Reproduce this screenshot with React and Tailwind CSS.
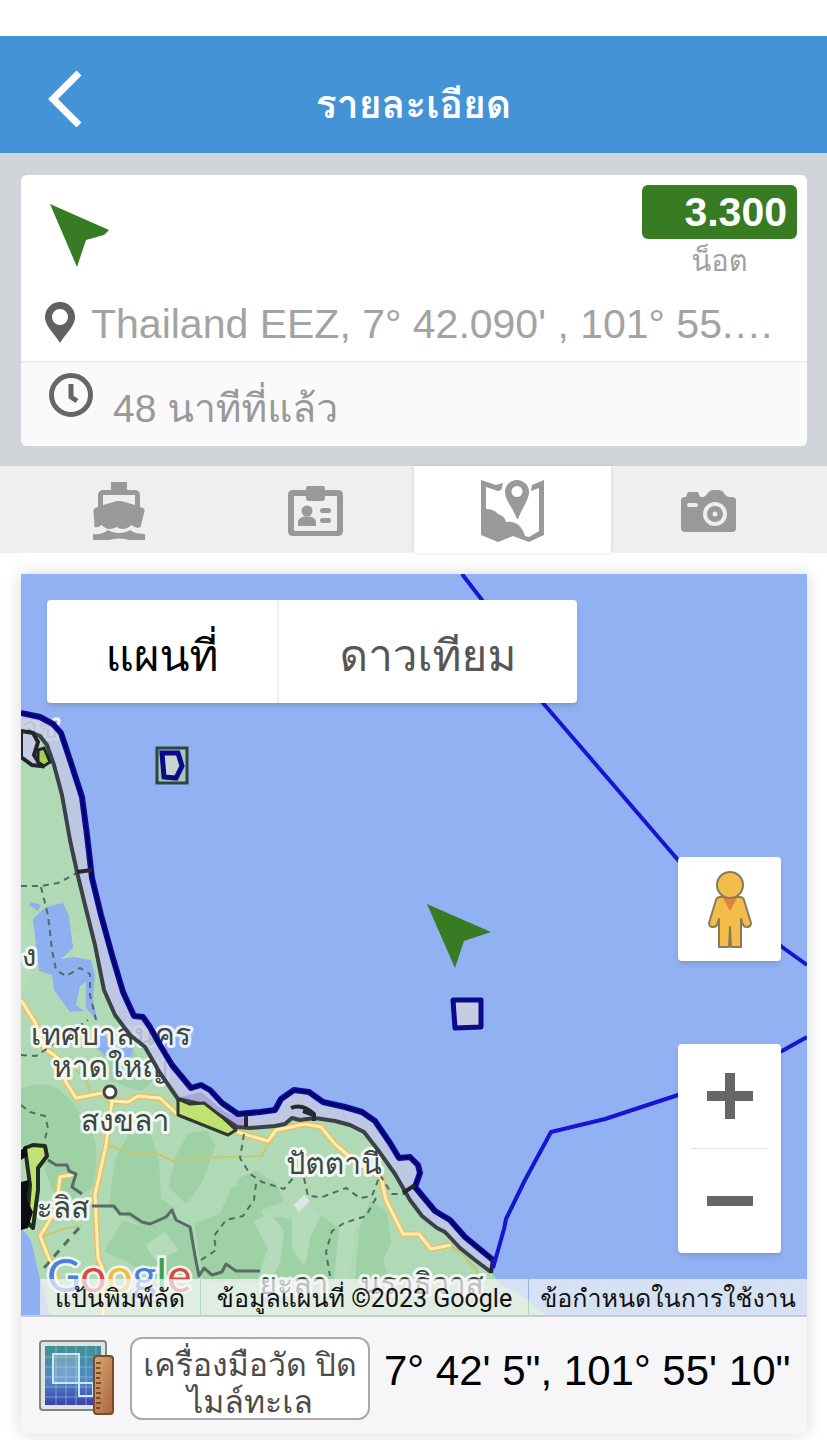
import React, { useState } from 'react';
import { clsx } from 'clsx';

const COAST_OUTER = '21,713 40,717 53,724 61,733 70,760 82,797 87,835 92,878 101,915 112,955 123,992 134,1016 143,1017 150,1027 160,1045 172,1065 191,1088 201,1085 210,1090 222,1103 238,1114 260,1112 275,1110 281,1099 294,1090 309,1092 323,1102 345,1107 362,1112 375,1121 390,1143 399,1158 410,1157 418,1165 420,1173 415,1187 435,1211 450,1220 465,1237 493,1260';
const COAST_INNER = '491,1272 475,1260 460,1248 445,1232 437,1228 422,1216 410,1200 395,1174 378,1150 364,1132 350,1125 335,1121 315,1118 300,1120 292,1118 285,1124 275,1126 250,1128 237,1127 222,1117 200,1104 178,1099 160,1073 145,1047 130,1035 115,1015 104,990 95,945 85,905 77,872 70,840 62,795 54,765 47,745 40,736 28,731';

const EEZ_LINES = [
    '462,574 482,600 543,703 678,860 782,947 807,965',
    '807,1037 782,1051 678,1095 605,1119 551,1132 525,1180 506,1219 504,1229 493,1268',
];

const FOREST = [
    'M21 1092Q48 1080 64 1098T88 1130Q98 1150 90 1186L62 1200Q48 1180 44 1150L21 1142Z',
    'M112 1206 118 1160 130 1138 148 1136 156 1160 158 1200 172 1210 168 1222 148 1226 128 1214Z',
    'M172 1186 178 1158 190 1136 206 1134 212 1146 200 1180 186 1200Z',
    'M235 1196 242 1180 256 1174 274 1186 280 1200 258 1208Z',
    'M108 1250 124 1224 150 1232 168 1218 190 1230 196 1276 164 1279 130 1260Z',
    'M198 1226 222 1216 234 1190 256 1204 262 1222 282 1220 304 1228 320 1218 336 1230 342 1279 206 1279Z',
    'M362 1230 372 1204 384 1214 388 1242 380 1260 386 1279 358 1279Z',
    'M102 1048 130 1050 150 1080 140 1088 112 1078Z',
];

const LIGHT_LAND = [
    'M21 918 40 940 30 975 21 990Z',
    'M72 935 92 930 98 960 84 975 74 950Z',
    'M256 1222 270 1216 282 1232 278 1262 268 1279 260 1279 270 1248Z',
    'M294 1216 304 1204 318 1216 308 1238 304 1262 294 1248Z',
    'M342 1222 354 1216 352 1250 344 1279 336 1279Z',
    'M148 1246 164 1234 176 1250 156 1258Z',
];

const ROADS = [
    '21,1000 36,1024 44,1048 58,1058 56,1066 76,1098 102,1093 112,1101 128,1102 138,1096 160,1098 178,1115',
    '237,1132 268,1141 276,1130 305,1124 321,1127 335,1144 358,1164 381,1177 386,1200 403,1234 419,1234 431,1249 451,1245',
    '112,1101 106,1145 95,1195 98,1258 103,1270 103,1315',
    '76,1174 60,1177 56,1210 40,1236 52,1266 60,1290',
];

const THIN_ROADS = [
    '108,1145 130,1153 160,1155 175,1162 200,1158 262,1156 270,1140',
    '42,1237 66,1228 82,1226',
    '76,1070 86,1080 90,1092',
    '451,1245 464,1256 478,1272 470,1279',
];

const DASHED = [
    '21,886 41,886 58,883 77,873',
    '41,887 48,915 52,950 56,970 66,976 80,968 90,974 90,995 96,1020',
    '21,1055 36,1056 48,1048 88,1020',
    '21,1105 30,1112 45,1116 48,1128 44,1142',
    '244,1134 240,1158 250,1174 262,1182 284,1189 298,1172 310,1160',
    '256,1184 254,1200 243,1216 226,1220 214,1236 216,1250 198,1262',
    '304,1178 308,1196 322,1197 346,1188 360,1198 372,1196 380,1175 392,1194 410,1194',
    '376,1198 366,1216 344,1223 332,1231 326,1252 330,1276',
];

const PROVINCES = [
    '48,1160 56,1165 67,1165 69,1171 76,1174 72,1187 82,1194',
    '92,1206 114,1206 120,1214 130,1214 142,1222 150,1224 166,1217 172,1210 176,1220 190,1227 195,1256 199,1276 204,1268 212,1275 222,1272 226,1264 236,1271 260,1271',
];

const ArrowMarker = ({ className }) => (
    <svg viewBox="0 0 64 64" className={className} aria-hidden="true">
        <path d="M1 1 60 27 55 32 37 37 28 64Z" fill="#377c22" />
    </svg>
);

const BoatIcon = () => (
    <svg viewBox="0 0 52 58" className="h-[58px] w-[52px]" fill="#999">
        <path d="M18 0h16v8h8a5 5 0 0 1 5 5v12l3 1q2 1 1.500 3l-4 16-3 1q-3-1-6-3-5 4-8 4-4 0-7-2-3 2-7 2t-8-4q-3 3-7 2L.5 29Q0 27 2 26l3-1V13a5 5 0 0 1 5-5h8ZM10 13v10l14-4h4l14 4V13Z" />
        <path d="M0 52c6 1 11-1 15-4 6 4 16 4 22 0 4 3 9 4 15 4v6H36q-9-3-20 0H0Z" />
    </svg>
);

const IdCardIcon = () => (
    <svg viewBox="0 0 55 50" className="h-[50px] w-[55px]" fill="#999">
        <path fillRule="evenodd" d="M5 4h13V2q0-2 2-2h15q2 0 2 2v2h13q5 0 5 5v36q0 5-5 5H5q-5 0-5-5V9Q0 4 5 4Zm2 6q-1 0-1 1v33q0 1 1 1h41q1 0 1-1V11q0-1-1-1H37v2q0 3-3 3H21q-3 0-3-3v-2Z" />
        <circle cx="19" cy="25" r="5.500" />
        <path d="M10 40v-4q0-4 6-5.500h6q6 1.500 6 5.500v4Z" />
        <rect x="32" y="22" width="11" height="5" rx="2.500" />
        <rect x="32" y="32" width="11" height="5" rx="2.500" />
    </svg>
);

const MapTabIcon = () => (
    <svg viewBox="0 0 63 62" className="h-[62px] w-[63px]" fill="#999">
        <path d="M0 0l15 5 7-2-1 5q-1 3-4 3L5 7v22q8 0 12 5 7 2 8 8 14-2 19 14l4 1 10-6V8l-8 3 1-6L63 0v55l-15 7-16-6-15 6L0 55Z" />
        <path fillRule="evenodd" d="M36 0a12 12 0 0 1 12 12c0 8-7 16-11 27h-1C32 28 24 20 24 12A12 12 0 0 1 36 0Zm0 6a5.500 5.500 0 1 0 0 11 5.500 5.500 0 0 0 0-11Z" />
    </svg>
);

const CameraIcon = () => (
    <svg viewBox="0 0 55 42" className="h-[42px] w-[55px]">
        <path fill="#999" d="M4 7h1l2-5h10l2 5h3q3-1 5-4 2-3 5-3h6q3 0 5 3 2 4 6 4h2q4 0 4 4v27q0 4-4 4H4q-4 0-4-4V11q0-4 4-4Z" />
        <rect x="6" y="13" width="11" height="4" rx="2" fill="#eee" />
        <circle cx="34" cy="24" r="10" fill="none" stroke="#eee" strokeWidth="4" />
        <circle cx="34" cy="24" r="2.500" fill="#eee" />
    </svg>
);

const TABS = [
    { id: 'vessel', label: 'vessel', Icon: BoatIcon },
    { id: 'license', label: 'license', Icon: IdCardIcon },
    { id: 'map', label: 'map', Icon: MapTabIcon },
    { id: 'photo', label: 'photo', Icon: CameraIcon },
];

const Header = () => (
    <header className="grid h-[117px] grid-cols-[1fr_auto_1fr] items-center bg-[#4493d6] px-12 text-white">
        <button type="button" aria-label="back" className="justify-self-start">
            <svg viewBox="0 0 34 56" className="mt-2 h-14 w-[34px]" fill="none" stroke="currentColor" strokeWidth="7">
                <path d="M31 2 5 28 31 54" />
            </svg>
        </button>
        <h1 className="pt-5 text-[39px] leading-[60px] font-bold">รายละเอียด</h1>
    </header>
);

const VesselCard = () => (
    <section className="bg-[#d1d5da] px-5 pt-[22px] pb-5 pl-[21px]">
        <div className="overflow-hidden rounded-md bg-white">
            <div className="flex items-start justify-between pt-[10px] pr-[10px] pl-7">
                <ArrowMarker className="mt-[18px] h-16 w-16" />
                <div className="flex w-[155px] flex-col">
                    <span className="h-[54px] rounded-md bg-[#377c22] pr-[10px] text-right text-[41px] leading-[54px] font-bold text-white">3.300</span>
                    <span className="text-center text-[29px] leading-[44px] text-[#a0a0a0]">น็อต</span>
                </div>
            </div>
            <div className="flex h-[78px] items-center gap-4 pr-6 pl-6">
                <svg viewBox="0 0 30 41" className="h-[41px] w-[30px] shrink-0" fill="#616161">
                    <path fillRule="evenodd" d="M15 0a15 15 0 0 1 15 15c0 9-8 15-15 26C8 30 0 24 0 15A15 15 0 0 1 15 0Zm0 7a8 8 0 1 0 0 16 8 8 0 0 0 0-16Z" />
                </svg>
                <p className="truncate pt-1 text-[41px] leading-[54px] text-[#a3a3a3]">Thailand EEZ, 7° 42.090' , 101° 55.…</p>
            </div>
            <div className="flex h-[85px] items-start gap-5 border-t-2 border-[#eee] bg-[#fafafa] pl-7">
                <svg viewBox="0 0 44 44" className="mt-[10px] h-11 w-11 shrink-0" fill="none" stroke="#666" strokeWidth="5">
                    <circle cx="22" cy="22" r="19.500" />
                    <path d="M22 11v13l6 4" />
                </svg>
                <p className="pt-4 text-[39px] leading-[60px] text-[#999]">48 นาทีที่แล้ว</p>
            </div>
        </div>
    </section>
);

const TabBar = ({ active, onChange }) => (
    <nav className="grid h-[87px] grid-cols-4 bg-[#efefef] pr-5 pl-[21px]">
        {TABS.map(({ id, label, Icon }) => (
            <button
                key={id}
                type="button"
                aria-label={label}
                aria-pressed={active === id}
                onClick={() => onChange(id)}
                className={clsx('flex items-center justify-center pt-[3px]', active === id && 'bg-white shadow-[0_0_4px_rgba(0,0,0,0.12)]')}
            >
                <Icon />
            </button>
        ))}
    </nav>
);

const MapCanvas = () => (
    <svg viewBox="21 574 786 741" preserveAspectRatio="xMidYMid slice" className="block h-full w-full">
        <rect x="21" y="574" width="786" height="741" fill="#92b1f2" />

        {/* land */}
        <polygon fill="#b0d9b6" points={`21,1315 21,731 ${COAST_INNER.split(' ').reverse().join(' ')} 500,1284 528,1300 545,1315`} />
        {FOREST.map((d) => <path key={d} d={d} fill="#9fd1a7" stroke="#9fd1a7" strokeWidth="6" strokeLinejoin="round" />)}
        {LIGHT_LAND.map((d) => <path key={d} d={d} fill="#b4dcba" stroke="#b4dcba" strokeWidth="4" strokeLinejoin="round" />)}
        <g fill="#8fb0f0">
            <path d="M33 919 46 907 63 903 69 916 73 948 61 959 74 957 91 960 95 975 93 1000 98 1022 86 1008 86 982 80 986 76 1005 84 1011 70 1012 54 990 52 975 39 971Z" />
            <path d="M29 905 31 902 41 905 38 911Z" />
            <path d="M21 1228 31 1240 39 1275 50 1315H21Z" />
            <path d="M95 1047 103 1030 112 1048 134 1047 130 1058 106 1056Z" />
        </g>
        <path d="M294 1205 304 1195 310 1201 299 1212Z" fill="#dde6e3" />

        {/* roads and borders */}
        <g fill="none" strokeLinejoin="round">
            {THIN_ROADS.map((p) => <polyline key={p} points={p} stroke="#c9c76f" strokeWidth="2" />)}
            {ROADS.map((p) => <polyline key={p} points={p} stroke="#eebf62" strokeWidth="6" />)}
            {ROADS.map((p) => <polyline key={p + 'core'} points={p} stroke="#fdeeb4" strokeWidth="3" />)}
            {DASHED.map((p) => <polyline key={p} points={p} stroke="#50705f" strokeWidth="2" strokeDasharray="6 5" />)}
            {PROVINCES.map((p) => <polyline key={p} points={p} stroke="#5a6b66" strokeWidth="3" />)}
            <path d="M79 1228 44 1268" stroke="#50705f" strokeWidth="3" strokeDasharray="8 7" />
        </g>

        {/* place names */}
        <g className="fill-[#3d4545] stroke-white/80 stroke-[6px] text-[30px] [paint-order:stroke] [stroke-linejoin:round]" textAnchor="middle">
            <text x="111" y="1045">เทศบาลนคร</text>
            <text x="110" y="1077">หาดใหญ่</text>
            <text x="125" y="1131">สงขลา</text>
            <text x="334" y="1174">ปัตตานี</text>
            <text x="63" y="1218">ะลิส</text>
            <text x="29" y="966">ง</text>
            <text x="40" y="738" fillOpacity="0.5">าช</text>
            <text x="294" y="1294">ยะลา</text>
            <text x="422" y="1294">นราธิวาส</text>
        </g>
        <circle cx="110" cy="1092" r="6" fill="#fff" stroke="#3d4545" strokeWidth="3" />

        {/* territorial band */}
        <polygon points={`${COAST_OUTER} ${COAST_INNER} 21,730`} fill="#c6cce1" fillOpacity="0.85" />
        <polygon points="180,1097 201,1092 225,1112 246,1119 246,1127 232,1124 205,1104" fill="#a9a6da" />
        <g fill="none" strokeLinejoin="round">
            <polyline points={COAST_INNER} stroke="#3a4147" strokeWidth="4" />
            <polyline points={COAST_OUTER} stroke="#0b0bb4" strokeWidth="6" />
            <polyline points={COAST_OUTER} stroke="#06065e" strokeWidth="3" />
            <path d="M77 872 92 870M246 1116V1127M403 1193 415 1185M493 1259 491 1273M291 1108Q302 1103 314 1114V1121M314 1115 303 1111" stroke="#26272f" strokeWidth="4" />
        </g>
        <path d="M178 1099 190 1104 204 1103 222 1117 236 1130 228 1135 208 1127 178 1115Z" fill="#bfe272" stroke="#2f3a2c" strokeWidth="3" strokeLinejoin="round" />
        <path d="M21 731 33 733 38 742 34 755 41 766 32 765 21 757Z" fill="#c6cce1" stroke="#22262c" strokeWidth="4" />
        <path d="M38 750 44 748 50 762 44 766 38 762Z" fill="#a7cf52" stroke="#22262c" strokeWidth="3" />
        <path d="M25 1148 33 1145 45 1146 47 1156 38 1168 38 1190 33 1228 27 1222 30 1185Z" fill="#bfe272" stroke="#222b20" strokeWidth="4" strokeLinejoin="round" />
        <path d="M21 1182 29 1180 27 1200 33 1212 28 1228 21 1230ZM21 1150 27 1146 27 1156 21 1160Z" fill="#0b0d12" />

        {EEZ_LINES.map((p) => <polyline key={p} points={p} fill="none" stroke="#1616d2" strokeWidth="4" strokeLinejoin="round" />)}

        {/* islands */}
        <rect x="157" y="748" width="30" height="35" fill="#a9c7b4" stroke="#27473f" strokeWidth="3" />
        <path d="M162 753 178 753 182 766 176 778 164 777Z" fill="#c9d5d0" stroke="#0a0a8e" strokeWidth="5" />
        <path d="M453 1000 481 1000 481 1027 455 1028Z" fill="#c6cce1" stroke="#0a0a8c" strokeWidth="5" strokeLinejoin="round" />

        {/* vessel position */}
        <path d="M427 904 491 932 464 941 455 968Z" fill="#377c22" />

        <text x="47" y="1292" className="font-[family-name:Lato] text-[46px] stroke-white/80 stroke-[5px] [paint-order:stroke]">
            <tspan fill="#4a7fe0">G</tspan>
            <tspan fill="#d9493f">o</tspan>
            <tspan fill="#eebb3c">o</tspan>
            <tspan fill="#4a7fe0">g</tspan>
            <tspan fill="#3f9f58">l</tspan>
            <tspan fill="#d9493f">e</tspan>
        </text>
    </svg>
);

const PegmanIcon = () => (
    <svg viewBox="0 0 44 79" className="h-[79px] w-11" fill="#f3bd4b" stroke="#8a7a55" strokeWidth="2">
        <path strokeLinejoin="round" d="M12 27h20q3 0 4 3l7 23q0 4-4 4-3 0-4-2l-2-6v28H23l-1-20-1 20H11V49l-2 6q-1 2-4 2-4 0-4-4L8 30q1-3 4-3Z" />
        <path d="M15 28h14l-7 13Z" fill="#e0843a" stroke="none" />
        <circle cx="22" cy="15" r="13" />
    </svg>
);

const MapPanel = () => {
    const [mapType, setMapType] = useState('map');

    return (
        <div className="relative aspect-[786/741] w-full overflow-hidden">
            <MapCanvas />

            <div className="absolute top-[26px] left-[26px] flex h-[103px] overflow-hidden rounded-sm bg-white text-[44px] shadow-md">
                <button
                    type="button"
                    onClick={() => setMapType('map')}
                    className={clsx('w-[232px] border-r-2 border-[#eee] pt-2', mapType === 'map' ? 'font-medium text-black' : 'text-[#565656]')}
                >
                    แผนที่
                </button>
                <button
                    type="button"
                    onClick={() => setMapType('satellite')}
                    className={clsx('w-[298px] pt-2', mapType === 'satellite' ? 'font-medium text-black' : 'text-[#565656]')}
                >
                    ดาวเทียม
                </button>
            </div>

            <div className="absolute right-[26px] bottom-[62px] flex w-[103px] flex-col gap-[83px]">
                <button type="button" aria-label="street view" className="flex h-[104px] items-center justify-center rounded-sm bg-white shadow-md">
                    <PegmanIcon />
                </button>
                <div className="flex flex-col items-center rounded-sm bg-white shadow-md">
                    <button type="button" aria-label="zoom in" className="flex h-[104px] w-full items-center justify-center">
                        <svg viewBox="0 0 46 46" className="h-[46px] w-[46px]" fill="#666">
                            <path d="M18 0h10v18h18v10H28v18H18V28H0V18h18Z" />
                        </svg>
                    </button>
                    <span className="h-px w-[77px] bg-[#e3e3e3]" />
                    <button type="button" aria-label="zoom out" className="flex h-[104px] w-full items-center justify-center">
                        <svg viewBox="0 0 46 10" className="h-[10px] w-[46px]" fill="#666">
                            <path d="M0 0h46v10H0Z" />
                        </svg>
                    </button>
                </div>
            </div>

            <div className="absolute right-0 bottom-0 flex h-9 gap-px text-center font-[family-name:Roboto,Loma,'Noto_Sans_Thai_Looped',sans-serif] text-[25px] leading-10 whitespace-nowrap text-[#111]">
                <button type="button" className="min-w-[160px] bg-[#f5f5f5]/70">แป้นพิมพ์ลัด</button>
                <span className="min-w-[327px] bg-[#f5f5f5]/70">ข้อมูลแผนที่ ©2023 Google</span>
                <a href="#terms" className="min-w-[278px] bg-[#f5f5f5]/70">ข้อกำหนดในการใช้งาน</a>
            </div>
        </div>
    );
};

const MeasureIcon = () => (
    <svg viewBox="0 0 76 76" className="mt-0.5 h-[76px] w-[76px] shrink-0">
        <defs>
            <linearGradient id="sheet" x1="0" y1="0" x2="0" y2="1">
                <stop offset="0" stopColor="#40908f" />
                <stop offset="0.550" stopColor="#5588c8" />
                <stop offset="1" stopColor="#3c3fae" />
            </linearGradient>
            <linearGradient id="ruler" x1="0" y1="0" x2="1" y2="1">
                <stop offset="0" stopColor="#dfa975" />
                <stop offset="1" stopColor="#a4653a" />
            </linearGradient>
        </defs>
        <rect x="1" y="2" width="66" height="69" rx="3" fill="#dfe4e2" stroke="#7d8784" strokeWidth="2" />
        <rect x="6" y="7" width="56" height="59" fill="url(#sheet)" />
        <path d="M6 18H62M6 28H62M6 38H62M6 48H62M6 58H62M17 7V66M27 7V66M37 7V66M47 7V66M57 7V66" stroke="#8fc3dc" strokeWidth="1" opacity="0.700" />
        <rect x="14" y="15" width="26" height="29" fill="#fff" fillOpacity="0.200" />
        <path d="M14 15H40V57H54V44H14Z" fill="none" stroke="#c8eaf4" strokeWidth="2" />
        <rect x="55" y="17" width="19" height="58" rx="3" fill="url(#ruler)" stroke="#7b4a2a" strokeWidth="2" />
        <path d="M57 24h5M57 29h4M57 34h5M57 39h4M57 44h5M57 49h4M57 54h5M57 59h4M57 64h5M57 69h4" stroke="#5f3519" strokeWidth="1.500" />
    </svg>
);

const MeasureBar = () => (
    <div className="flex items-start border-t-2 border-[#c9cacc] bg-[#f6f6f8] pt-5 pr-3 pb-[14px] pl-[18px]">
        <MeasureIcon />
        <button type="button" className="ml-[15px] flex h-[83px] w-[240px] shrink-0 items-start justify-center rounded-xl border-2 border-[#aaa] bg-white pt-2 text-[32px] leading-[37px] text-[#4c4c4c]">
            <span>เครื่องมือวัด ปิด<br />ไมล์ทะเล</span>
        </button>
        <p className="ml-[14px] pt-1 text-[42px] leading-[60px] whitespace-nowrap text-black">7° 42' 5", 101° 55' 10"</p>
    </div>
);

const App = () => {
    const [tab, setTab] = useState('map');

    return (
        <div className="min-h-screen bg-white pt-9 font-[family-name:'Liberation_Sans',Loma,'Noto_Sans_Thai_Looped',Waree,Garuda,sans-serif]">
            <Header />
            <VesselCard />
            <TabBar active={tab} onChange={setTab} />
            <main className="pt-[21px] pr-5 pb-[6px] pl-[21px]">
                <div className="shadow-[0_0_16px_rgba(0,0,0,0.15)]">
                    <MapPanel />
                    <MeasureBar />
                </div>
            </main>
        </div>
    );
};

export default App;
